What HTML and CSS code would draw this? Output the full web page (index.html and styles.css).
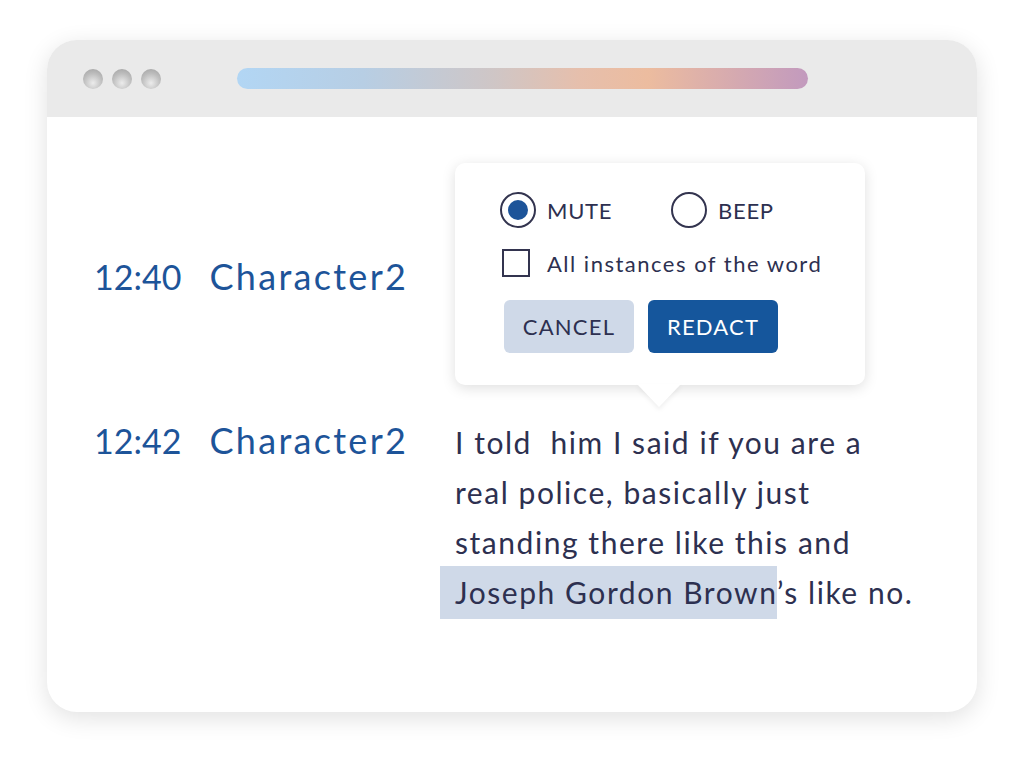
FILE: index.html
```html
<html>

<head>
	<meta charset="utf-8">
	<link rel="stylesheet" href="styles.css">
</head>

<body>

	<div class="window">

		<div class="titlebar">
			<div class="dots">
				<span class="dot"></span>
				<span class="dot"></span>
				<span class="dot"></span>
			</div>
			<div class="urlbar"></div>
		</div>

		<div class="content">

			<div class="row first">
				<div class="who">
					<span class="time">12:40</span>
					<span class="name">Character2</span>
				</div>
			</div>

			<div class="row">
				<div class="who">
					<span class="time">12:42</span>
					<span class="name">Character2</span>
				</div>
				<p class="line">
					I told &nbsp;him I said if you are a<br>
					real police, basically just<br>
					standing there like this and<br>
					<span class="mark">Joseph Gordon Brown</span>’s like no.
				</p>
			</div>

			<div class="popup">
				<div class="options">
					<label class="radio"><span class="circle checked"></span>MUTE</label>
					<label class="radio"><span class="circle"></span>BEEP</label>
				</div>
				<label class="check"><span class="box"></span>All instances of the word</label>
				<div class="buttons">
					<button class="btn cancel">CANCEL</button>
					<button class="btn redact">REDACT</button>
				</div>
			</div>

		</div>

	</div>

</body>

</html>
```

FILE: styles.css
```css
* {
	box-sizing: border-box;
}

html {
	font-family: Lato, "Open Sans", sans-serif;
	color: #2d3050;
}

body {
	margin: 0;
	padding: 40px 47px;
	background: #fff;
}

.window {
	width: 930px;
	height: 672px;
	border-radius: 30px;
	background: #fff;
	box-shadow: 0 6px 24px rgba(0, 0, 0, .12);
	overflow: hidden;
}

.titlebar {
	height: 77px;
	background: #eaeaea;
	display: flex;
	align-items: center;
	padding-left: 36px;
}

.dots {
	display: flex;
	gap: 9px;
}

.dot {
	width: 20px;
	height: 20px;
	border-radius: 50%;
	background: radial-gradient(circle at 50% 70%, #ececec 0, #bdbdbd 55%, #9e9e9e 100%);
}

.urlbar {
	margin-left: 76px;
	width: 571px;
	height: 21px;
	border-radius: 11px;
	background: linear-gradient(90deg, #b2d6f4 0%, #b7cee4 22%, #cfc6c6 45%, #e6bfac 60%, #ecbc9f 72%, #c29abe 100%);
}

.content {
	position: relative;
	padding: 134px 47px 0;
}

.row {
	display: flex;
	align-items: baseline;
}

.row.first {
	height: 164px;
}

.who {
	width: 361px;
	flex-shrink: 0;
	color: #1d5499;
	line-height: 50px;
	white-space: nowrap;
}

.time {
	font-size: 34px;
	margin-right: 24px;
}

.name {
	font-size: 36px;
	letter-spacing: 2.3px;
}

.line {
	margin: 0;
	font-size: 30px;
	line-height: 50px;
	letter-spacing: 1.55px;
	white-space: nowrap;
}

.mark {
	background: #cfd9e8;
	padding: 8px 0 9px 15px;
	margin-left: -15px;
}

.popup {
	position: absolute;
	left: 408px;
	top: 46px;
	width: 410px;
	height: 222px;
	background: #fff;
	border-radius: 10px;
	box-shadow: 0 3px 14px rgba(0, 0, 0, .13);
	padding: 29px 0 0 45px;
	font-size: 22px;
	letter-spacing: .7px;
}

.popup::after {
	content: "";
	position: absolute;
	left: 182px;
	bottom: -22px;
	border-left: 22px solid transparent;
	border-right: 22px solid transparent;
	border-top: 23px solid #fff;
	filter: drop-shadow(0 3px 2px rgba(0, 0, 0, .06));
}

.options {
	display: flex;
	gap: 59px;
}

.radio,
.check {
	display: flex;
	align-items: center;
}

.circle {
	width: 36px;
	height: 36px;
	border: 2px solid #33344f;
	border-radius: 50%;
	margin-right: 11px;
	display: flex;
	align-items: center;
	justify-content: center;
}

.circle.checked::before {
	content: "";
	width: 20px;
	height: 20px;
	border-radius: 50%;
	background: #1d5499;
}

.check {
	margin-top: 21px;
	padding-left: 2px;
	letter-spacing: 1.5px;
}

.box {
	width: 28px;
	height: 28px;
	border: 2px solid #33344f;
	margin-right: 17px;
}

.buttons {
	display: flex;
	gap: 14px;
	margin-top: 23px;
	padding-left: 4px;
}

.btn {
	width: 130px;
	height: 53px;
	border: 0;
	border-radius: 6px;
	font-family: inherit;
	font-size: 22px;
	letter-spacing: 1.2px;
}

.cancel {
	background: #cfd9e8;
	color: #2d3050;
}

.redact {
	background: #15569c;
	color: #fff;
}
```
